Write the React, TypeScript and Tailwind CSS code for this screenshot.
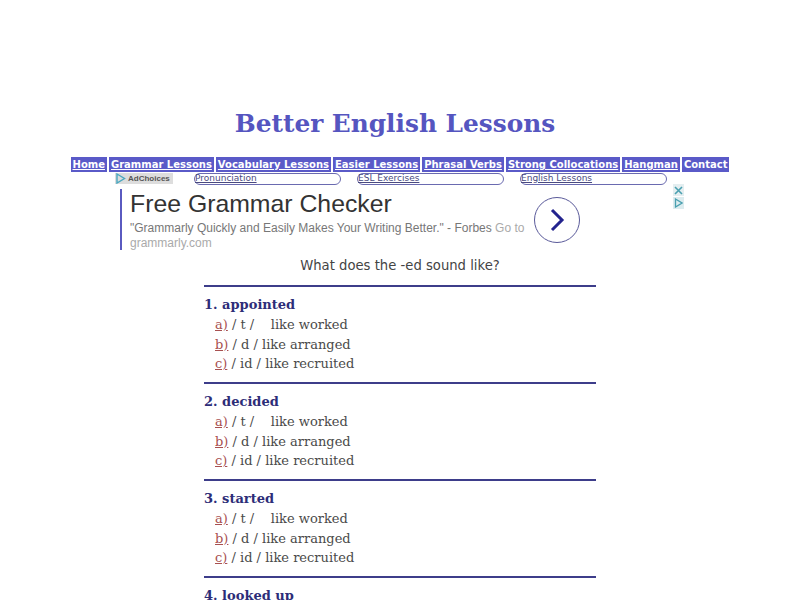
const navLinks = [
  "Home",
  "Grammar Lessons",
  "Vocabulary Lessons",
  "Easier Lessons",
  "Phrasal Verbs",
  "Strong Collocations",
  "Hangman",
  "Contact",
];

const subLinks = ["Pronunciation", "ESL Exercises", "English Lessons"];

const questions = ["appointed", "decided", "started", "looked up"];

const answers = [
  { key: "a)", text: "/ t /\u00a0\u00a0\u00a0 like worked" },
  { key: "b)", text: "/ d / like arranged" },
  { key: "c)", text: "/ id / like recruited" },
];

function AdBlock() {
  return (
    <div className="mt-[3px] ml-[120px] flex h-[62px] w-[566px] items-start">
      <div className="mt-[1px] h-[61px] w-[2px] bg-[#5a5ac0]" />
      <div className="ml-[8px] w-[402px] pt-[1px] font-['Liberation_Sans',sans-serif]">
        <div className="text-[24.8px] leading-[30px] text-[#333]">Free Grammar Checker</div>
        <div className="mt-[2px] text-[12px] leading-[15px] text-[#777]">
          "Grammarly Quickly and Easily Makes Your Writing Better." - Forbes <span className="text-[#aaa]">Go to grammarly.com</span>
        </div>
      </div>
      <div className="ml-[2px] mt-[9px] flex h-[46px] w-[46px] items-center justify-center rounded-full border-[1.5px] border-[#5a5a9a]">
        <svg width="18" height="24" viewBox="0 0 18 24" fill="none" stroke="#23238e" strokeWidth="3">
          <path d="M4 2 L14 12 L4 22" />
        </svg>
      </div>
      <div className="-mt-[4px] ml-[93px] flex flex-col gap-[1px]">
        <div className="flex h-[12px] w-[11px] items-center justify-center bg-[#e4eef0] text-[#4aa0b0]">
          <svg width="9" height="9" viewBox="0 0 9 9" stroke="currentColor" strokeWidth="1.6"><path d="M1 1 L8 8 M8 1 L1 8" /></svg>
        </div>
        <div className="flex h-[12px] w-[11px] items-center justify-center bg-[#dcecef] text-[#4aa0b0]">
          <svg width="9" height="10" viewBox="0 0 9 10" fill="none" stroke="currentColor" strokeWidth="1.3"><path d="M1.5 1 L8 5 L1.5 9 Z" /></svg>
        </div>
      </div>
    </div>
  );
}

export default function App() {
  return (
    <div className="h-[600px] w-[800px] overflow-hidden bg-white font-['DejaVu_Serif',serif]">
      <h1 className="pt-[108px] pr-[10px] text-center text-[24.8px] font-bold leading-[32px] text-[#5555c0]">
        Better English Lessons
      </h1>

      <nav className="mt-[17px] flex justify-center gap-[2px] font-['DejaVu_Sans',sans-serif]">
        {navLinks.map((link) => (
          <a
            key={link}
            className={`h-[15px] bg-[#5a5ac8] px-[2px] text-[10px] font-bold leading-[15px] text-white ${link === "Contact" ? "" : "underline"}`}
          >
            {link}
          </a>
        ))}
      </nav>

      <div className="flex h-[13px] items-center pl-[115px] font-['DejaVu_Sans',sans-serif]">
        <div className="flex h-[11px] w-[58px] items-center bg-[#ddd]">
          <svg width="11" height="11" viewBox="0 0 11 11" fill="none" stroke="#4aa8c0" strokeWidth="1.4"><path d="M2 1 L9.5 5.5 L2 10 Z" /></svg>
          <span className="ml-[2px] font-['Liberation_Sans',sans-serif] text-[8px] font-bold text-[#555]">AdChoices</span>
        </div>
        <div className="ml-[21px] flex gap-[16px]">
          {subLinks.map((link) => (
            <a
              key={link}
              className="h-[12px] w-[147px] rounded-full border-[1.5px] border-[#6a6ab0] text-[9px] leading-[9px] text-[#4a4a80] underline"
            >
              {link}
            </a>
          ))}
        </div>
      </div>

      <AdBlock />

      <p className="pt-[1px] text-center font-['DejaVu_Sans',sans-serif] text-[13.2px] leading-[29px] text-[#444]">
        What does the -ed sound like?
      </p>

      <main className="mx-auto mt-[5px] w-[392px]">
        {questions.map((word, i) => (
          <section key={word} className="border-t-2 border-[#3d3d8a] pt-[8px] pb-[8.5px]">
            <h2 className="text-[13px] font-bold leading-[20px] text-[#2d2d78]">
              {i + 1}. {word}
            </h2>
            <ul className="pl-[11px] text-[13px] leading-[19.5px] text-[#4a4a4a]">
              {answers.map((a) => (
                <li key={a.key}>
                  <a className="text-[#a85050] underline">{a.key}</a> {a.text}
                </li>
              ))}
            </ul>
          </section>
        ))}
      </main>
    </div>
  );
}
